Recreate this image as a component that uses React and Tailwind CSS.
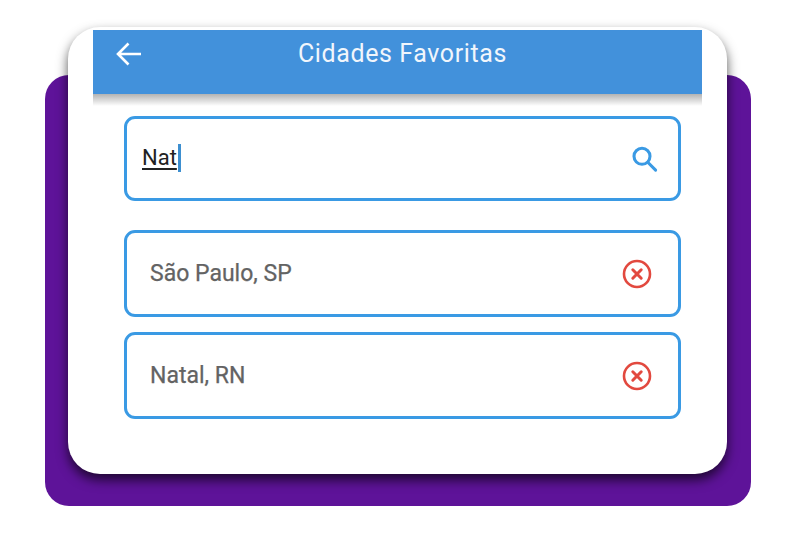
import React from "react";

const font = { fontFamily: "Roboto, sans-serif" };

function Row({ label }) {
  return (
    <div className="flex h-[87px] items-center justify-between rounded-[11px] border-[3px] border-[#3a9ae4] pl-[23px] pr-[26px]">
      <span className="mt-[1px] text-[23px] font-normal text-[#636363] [-webkit-text-stroke:0.25px_#636363]">{label}</span>
      <svg width="30" height="30" viewBox="0 0 30 30" fill="none" stroke="#e2493f" strokeLinecap="round">
        <circle cx="15" cy="15" r="13" strokeWidth="2.6" />
        <path d="M10.8 10.8 L19.2 19.2 M19.2 10.8 L10.8 19.2" strokeWidth="3" />
      </svg>
    </div>
  );
}

export default function App() {
  return (
    <div className="relative h-[536px] w-[799px] overflow-hidden bg-white pl-[68px] pt-[27px]" style={font}>
      <div className="absolute left-[45px] top-[75px] h-[431px] w-[706px] rounded-[24px] bg-[#5e1399]" />
      <div className="relative h-[447px] w-[659px] rounded-[32px] bg-white px-[25px] pt-[3px] shadow-[0_6px_12px_0_rgba(0,0,0,0.68)]">
        <header className="flex h-[64px] w-[609px] items-center bg-[#4291db] pl-[22px]">
          <svg width="28" height="28" viewBox="0 0 28 28" fill="none" stroke="white" strokeWidth="2.6" className="-mt-[16px]">
            <path d="M26 14 H3.5 M13.5 3.5 L3 14 L13.5 24.5" />
          </svg>
          <h1 className="ml-[155px] -mt-[16px] text-[25px] font-normal tracking-[0.6px] text-[#f1f6fc]">Cidades Favoritas</h1>
        </header>
        <div className="h-[12px] w-[609px] bg-gradient-to-b from-black/30 to-transparent" />
        <div className="ml-[31px] mt-[10px] w-[557px]">
          <div className="flex h-[85px] items-center justify-between rounded-[11px] border-[3px] border-[#3a9ae4] pl-[15px] pr-[18px]">
            <div className="-mt-[1px] flex items-center">
              <span className="text-[22px] leading-[24px] text-[#222] underline underline-offset-[3px] decoration-[1.5px]">Nat</span>
              <span className="ml-[1px] h-[28px] w-[3px] bg-[#3d8fd0]" />
            </div>
            <svg width="32" height="32" viewBox="0 0 24 24" fill="none" stroke="#3a9ae4" strokeWidth="2.3" strokeLinecap="round">
              <circle cx="10.5" cy="10" r="6" />
              <path d="M15 14.6 L20.7 20.3" />
            </svg>
          </div>
          <div className="mt-[29px] flex flex-col gap-[15px]">
            <Row label="São Paulo, SP" />
            <Row label="Natal, RN" />
          </div>
        </div>
      </div>
    </div>
  );
}
